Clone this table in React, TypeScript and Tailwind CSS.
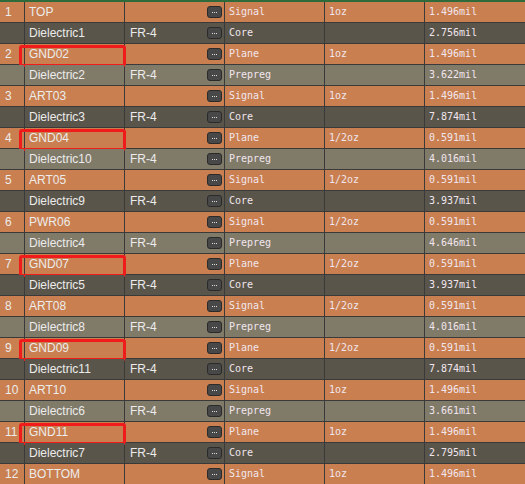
import React from "react";

type Row = {
  n?: string;
  name: string;
  mat?: string;
  type: string;
  w?: string;
  t: string;
  kind: "cu" | "core" | "pp";
  box?: boolean;
};

const rows: Row[] = [
  { n: "1", name: "TOP", type: "Signal", w: "1oz", t: "1.496mil", kind: "cu" },
  { name: "Dielectric1", mat: "FR-4", type: "Core", t: "2.756mil", kind: "core" },
  { n: "2", name: "GND02", type: "Plane", w: "1oz", t: "1.496mil", kind: "cu", box: true },
  { name: "Dielectric2", mat: "FR-4", type: "Prepreg", t: "3.622mil", kind: "pp" },
  { n: "3", name: "ART03", type: "Signal", w: "1oz", t: "1.496mil", kind: "cu" },
  { name: "Dielectric3", mat: "FR-4", type: "Core", t: "7.874mil", kind: "core" },
  { n: "4", name: "GND04", type: "Plane", w: "1/2oz", t: "0.591mil", kind: "cu", box: true },
  { name: "Dielectric10", mat: "FR-4", type: "Prepreg", t: "4.016mil", kind: "pp" },
  { n: "5", name: "ART05", type: "Signal", w: "1/2oz", t: "0.591mil", kind: "cu" },
  { name: "Dielectric9", mat: "FR-4", type: "Core", t: "3.937mil", kind: "core" },
  { n: "6", name: "PWR06", type: "Signal", w: "1/2oz", t: "0.591mil", kind: "cu" },
  { name: "Dielectric4", mat: "FR-4", type: "Prepreg", t: "4.646mil", kind: "pp" },
  { n: "7", name: "GND07", type: "Plane", w: "1/2oz", t: "0.591mil", kind: "cu", box: true },
  { name: "Dielectric5", mat: "FR-4", type: "Core", t: "3.937mil", kind: "core" },
  { n: "8", name: "ART08", type: "Signal", w: "1/2oz", t: "0.591mil", kind: "cu" },
  { name: "Dielectric8", mat: "FR-4", type: "Prepreg", t: "4.016mil", kind: "pp" },
  { n: "9", name: "GND09", type: "Plane", w: "1/2oz", t: "0.591mil", kind: "cu", box: true },
  { name: "Dielectric11", mat: "FR-4", type: "Core", t: "7.874mil", kind: "core" },
  { n: "10", name: "ART10", type: "Signal", w: "1oz", t: "1.496mil", kind: "cu" },
  { name: "Dielectric6", mat: "FR-4", type: "Prepreg", t: "3.661mil", kind: "pp" },
  { n: "11", name: "GND11", type: "Plane", w: "1oz", t: "1.496mil", kind: "cu", box: true },
  { name: "Dielectric7", mat: "FR-4", type: "Core", t: "2.795mil", kind: "core" },
  { n: "12", name: "BOTTOM", type: "Signal", w: "1oz", t: "1.496mil", kind: "cu" },
];

const bgFor = (k: Row["kind"]) =>
  k === "cu" ? "bg-[#c97f4f]" : k === "core" ? "bg-[#59554a]" : "bg-[#807a69]";

function DotsButton() {
  return (
    <div className="w-[15px] h-[12px] rounded-[3px] bg-[#484848] border border-[#2a2a2a] flex items-center justify-center gap-[1px]">
      <span className="w-[1px] h-[1px] bg-[#dcdcdc]" />
      <span className="w-[1px] h-[1px] bg-[#dcdcdc]" />
      <span className="w-[1px] h-[1px] bg-[#dcdcdc]" />
    </div>
  );
}

const sans = "font-['Liberation_Sans','Noto_Sans',sans-serif] text-[12px] text-[#ececec]";
const mono = "font-['DejaVu_Sans_Mono','Liberation_Mono',monospace] text-[10px] text-[#f1e6ee]";

export default function App() {
  return (
    <div className="w-[525px] h-[484px] overflow-hidden bg-[#3a3a3a]">
      <div className="h-[2px] bg-[#2e6a3a]" />
      <div className="flex flex-col gap-px">
        {rows.map((r, i) => {
          const bg = bgFor(r.kind);
          return (
            <div
              key={i}
              className="relative grid grid-cols-[24px_99px_99px_99px_99px_1fr] gap-px h-[20px]"
            >
              <div className={`${bg} ${sans} pl-[5px] flex items-center leading-none`}>{r.n}</div>
              <div className={`${bg} ${sans} pl-[4px] flex items-center leading-none`}>{r.name}</div>
              <div className={`${bg} ${sans} pl-[5px] pr-[2px] flex items-center justify-between leading-none`}>
                <span>{r.mat}</span>
                <DotsButton />
              </div>
              <div className={`${bg} ${mono} pl-[4px] flex items-center leading-none`}>{r.type}</div>
              <div className={`${bg} ${mono} pl-[4px] flex items-center leading-none`}>{r.w}</div>
              <div className={`${bg} ${mono} pl-[4px] flex items-center leading-none`}>{r.t}</div>
              {r.box && (
                <div className="absolute left-[19px] top-[1px] w-[107px] h-[22px] border-[3px] border-[#f01c1c] rounded-[3px] pointer-events-none" />
              )}
            </div>
          );
        })}
      </div>
    </div>
  );
}
